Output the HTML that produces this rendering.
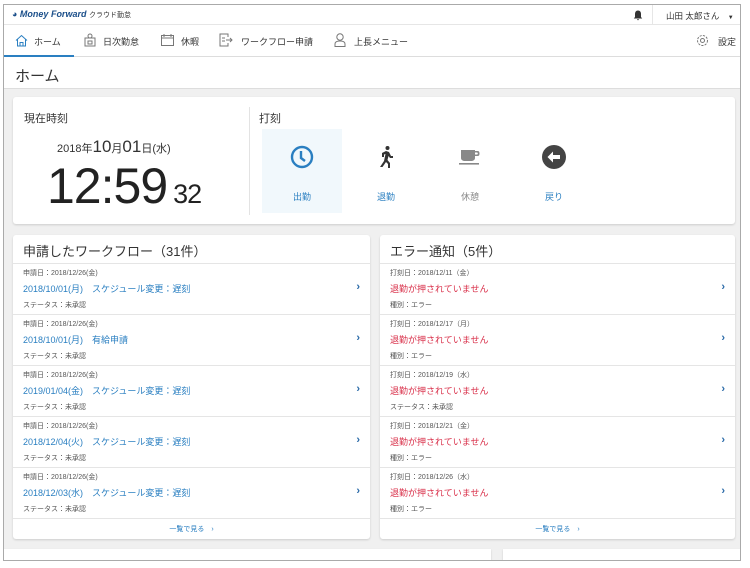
<!DOCTYPE html>
<html><head><meta charset="utf-8"><style>
*{box-sizing:border-box;margin:0;padding:0}
body{width:750px;height:568px;background:#fff;font-family:"Liberation Sans","Noto Sans CJK JP",sans-serif;color:#333;position:relative;overflow:hidden}
.frame{position:absolute;left:3px;top:4px;width:738px;height:557px;border:1px solid #aaa;background:#f0f0f0;overflow:hidden}
.abs{position:absolute}
.top{left:0;top:0;width:100%;height:20px;background:#fff;border-bottom:1px solid #e6e6e6}
.nav{left:0;top:20px;width:100%;height:32px;background:#fff;border-bottom:1px solid #ddd;font-size:9px}
.nav span{position:absolute;top:10px}
.title{left:0;top:52px;width:100%;height:32px;background:#fff;border-bottom:1px solid #ddd;font-size:15px;padding:8px 11px}
.card{background:#fff;border-radius:3px;box-shadow:0 1px 2px rgba(0,0,0,.15)}
.hd{height:29px;border-bottom:1px solid #e5e5e5;font-size:13px;padding:6px 10px}
.row{height:51px;border-bottom:1px solid #e5e5e5;position:relative;padding:6px 10px;font-size:7px;line-height:1}
.row .a{color:#555}
.row .b{font-size:9px;margin:8px 0 8px;color:#2a7fc1}
.row .b.r{color:#d9304a}
.row .ch{position:absolute;right:10px;top:18px;color:#2a6aa8;font-size:11px;font-weight:bold}
.ft{height:21px;text-align:center;font-size:7px;color:#2a7fc1;padding-top:5px}
.btn{position:absolute;top:32px;width:80px;height:84px;text-align:center;font-size:9px}
.btn .ic{position:absolute;left:28px;top:16px;width:24px;height:24px}
.btn .lb{position:absolute;left:0;width:100%;top:61px}
</style></head><body>
<div class="frame">
 <div class="abs top">
  <div class="abs" style="left:8px;top:4px;font-size:9px;font-weight:bold;color:#1b4f8a;font-style:italic">◕ Money Forward <span style="font-weight:normal;font-style:normal;font-size:7px;color:#333">クラウド勤怠</span></div>
  <svg class="abs" style="left:629px;top:5px" width="10" height="11" viewBox="0 0 10 11"><path d="M5 0.5C3 0.5 2 2 2 4V7L0.8 8.5H9.2L8 7V4C8 2 7 0.5 5 0.5ZM4 9.3H6A1 1 0 0 1 4 9.3Z" fill="#333"/></svg>
  <div class="abs" style="left:648px;top:0;width:1px;height:20px;background:#e6e6e6"></div>
  <div class="abs" style="left:662px;top:5px;font-size:8.5px">山田 太郎さん <span style="font-size:6px;margin-left:6px">▼</span></div>
 </div>
 <div class="abs nav">
  <svg class="abs" style="left:11px;top:9px" width="13" height="13" viewBox="0 0 13 13" fill="none" stroke="#2a7fc1"><path d="M1 6.5L6.5 1.5L12 6.5M2.5 5.5V12H10.5V5.5M5 12V8.5H8V12"/></svg>
  <span style="left:30px">ホーム</span>
  <div class="abs" style="left:0;top:30px;width:70px;height:2px;background:#2a7fc1"></div>
  <svg class="abs" style="left:80px;top:8px" width="12" height="14" viewBox="0 0 12 14" fill="none" stroke="#777"><rect x="1" y="5" width="10" height="8"/><circle cx="6" cy="3" r="2"/><rect x="4" y="8" width="4" height="3"/></svg>
  <span style="left:99px">日次勤怠</span>
  <svg class="abs" style="left:157px;top:9px" width="13" height="12" viewBox="0 0 13 12" fill="none" stroke="#777"><rect x="0.5" y="1.5" width="12" height="10"/><path d="M0.5 4H12.5M3 0V3M10 0V3"/></svg>
  <span style="left:177px">休暇</span>
  <svg class="abs" style="left:215px;top:8px" width="14" height="14" viewBox="0 0 14 14" fill="none" stroke="#777"><path d="M9 4V1H1V13H9V10M3 5H6M3 8H6M7 7H13M11 5L13 7L11 9"/></svg>
  <span style="left:237px">ワークフロー申請</span>
  <svg class="abs" style="left:330px;top:8px" width="12" height="14" viewBox="0 0 12 14" fill="none" stroke="#777"><circle cx="6" cy="4" r="3.2"/><path d="M1 13.5V11C1 9 3 8 6 8S11 9 11 11V13.5Z"/></svg>
  <span style="left:350px">上長メニュー</span>
  <svg class="abs" style="left:692px;top:9px" width="13" height="13" viewBox="0 0 13 13" fill="none" stroke="#777"><circle cx="6.5" cy="6.5" r="2"/><circle cx="6.5" cy="6.5" r="5" stroke-dasharray="2.2 1.2"/></svg>
  <span style="left:714px">設定</span>
 </div>
 <div class="abs title">ホーム</div>

 <div class="abs card" style="left:9px;top:92px;width:722px;height:127px">
  <div class="abs" style="left:11px;top:13px;font-size:11px">現在時刻</div>
  <div class="abs" style="left:44px;top:40px;font-size:11px;white-space:nowrap">2018年<span style="font-size:17px">10</span>月<span style="font-size:17px">01</span>日(水)</div>
  <div class="abs" style="left:34px;top:60px;font-size:50px;letter-spacing:-1px;white-space:nowrap;color:#222">12:59<span style="font-size:27px;margin-left:6px">32</span></div>
  <div class="abs" style="left:236px;top:10px;width:1px;height:108px;background:#e3e3e3"></div>
  <div class="abs" style="left:246px;top:13px;font-size:11px">打刻</div>
  <div class="btn" style="left:249px;background:#f1f8fc;color:#2a7fc1">
   <svg class="ic" viewBox="0 0 24 24" fill="none" stroke="#2a7fc1" stroke-width="2.4"><circle cx="12" cy="12" r="10"/><path d="M11 6V13L15 16"/></svg>
   <div class="lb">出勤</div></div>
  <div class="btn" style="left:333px;color:#2a7fc1">
   <svg class="ic" viewBox="0 0 24 24" fill="#333"><circle cx="13.5" cy="3" r="2"/><path d="M12 6L8 8V12H10V9.5L11.5 9L10 16L6 22H8.5L12 17L14 19V23H16V18L13.5 15L14.5 11L16 13H19V11H17L15 7Z"/></svg>
   <div class="lb">退勤</div></div>
  <div class="btn" style="left:417px;color:#888">
   <svg class="ic" viewBox="0 0 24 24" fill="#888"><path d="M3 5H17V13C17 15 15 16 13 16H7C5 16 3 15 3 13ZM17 6H19.5C21 6 21.5 7 21.5 8.5S21 11 19.5 11H17V9.5H19C19.5 9.5 19.8 9 19.8 8.5S19.5 7.5 19 7.5H17Z"/><rect x="1" y="18" width="20" height="1.6"/></svg>
   <div class="lb">休憩</div></div>
  <div class="btn" style="left:501px;color:#2a7fc1">
   <svg class="ic" viewBox="0 0 24 24"><circle cx="12" cy="12" r="12" fill="#444"/><path d="M5.5 12L11 6.5V10H18V14H11V17.5Z" fill="#fff"/></svg>
   <div class="lb">戻り</div></div>
 </div>

 <div class="abs card" style="left:9px;top:230px;width:357px;height:304px">
  <div class="hd">申請したワークフロー（31件）</div>
  <div class="row"><div class="a">申請日：2018/12/26(金)</div><div class="b">2018/10/01(月)　スケジュール変更：遅刻</div><div class="a">ステータス：未承認</div><div class="ch">›</div></div>
  <div class="row"><div class="a">申請日：2018/12/26(金)</div><div class="b">2018/10/01(月)　有給申請</div><div class="a">ステータス：未承認</div><div class="ch">›</div></div>
  <div class="row"><div class="a">申請日：2018/12/26(金)</div><div class="b">2019/01/04(金)　スケジュール変更：遅刻</div><div class="a">ステータス：未承認</div><div class="ch">›</div></div>
  <div class="row"><div class="a">申請日：2018/12/26(金)</div><div class="b">2018/12/04(火)　スケジュール変更：遅刻</div><div class="a">ステータス：未承認</div><div class="ch">›</div></div>
  <div class="row"><div class="a">申請日：2018/12/26(金)</div><div class="b">2018/12/03(水)　スケジュール変更：遅刻</div><div class="a">ステータス：未承認</div><div class="ch">›</div></div>
  <div class="ft">一覧で見る　›</div>
 </div>

 <div class="abs card" style="left:376px;top:230px;width:355px;height:304px">
  <div class="hd">エラー通知（5件）</div>
  <div class="row"><div class="a">打刻日：2018/12/11（金）</div><div class="b r">退勤が押されていません</div><div class="a">種別：エラー</div><div class="ch">›</div></div>
  <div class="row"><div class="a">打刻日：2018/12/17（月）</div><div class="b r">退勤が押されていません</div><div class="a">種別：エラー</div><div class="ch">›</div></div>
  <div class="row"><div class="a">打刻日：2018/12/19（水）</div><div class="b r">退勤が押されていません</div><div class="a">ステータス：未承認</div><div class="ch">›</div></div>
  <div class="row"><div class="a">打刻日：2018/12/21（金）</div><div class="b r">退勤が押されていません</div><div class="a">種別：エラー</div><div class="ch">›</div></div>
  <div class="row"><div class="a">打刻日：2018/12/26（水）</div><div class="b r">退勤が押されていません</div><div class="a">種別：エラー</div><div class="ch">›</div></div>
  <div class="ft">一覧で見る　›</div>
 </div>

 <div class="abs card" style="left:0;top:544px;width:487px;height:20px;border-radius:0"></div>
 <div class="abs card" style="left:499px;top:544px;width:240px;height:20px;border-radius:0"></div>
</div>
</body></html>
